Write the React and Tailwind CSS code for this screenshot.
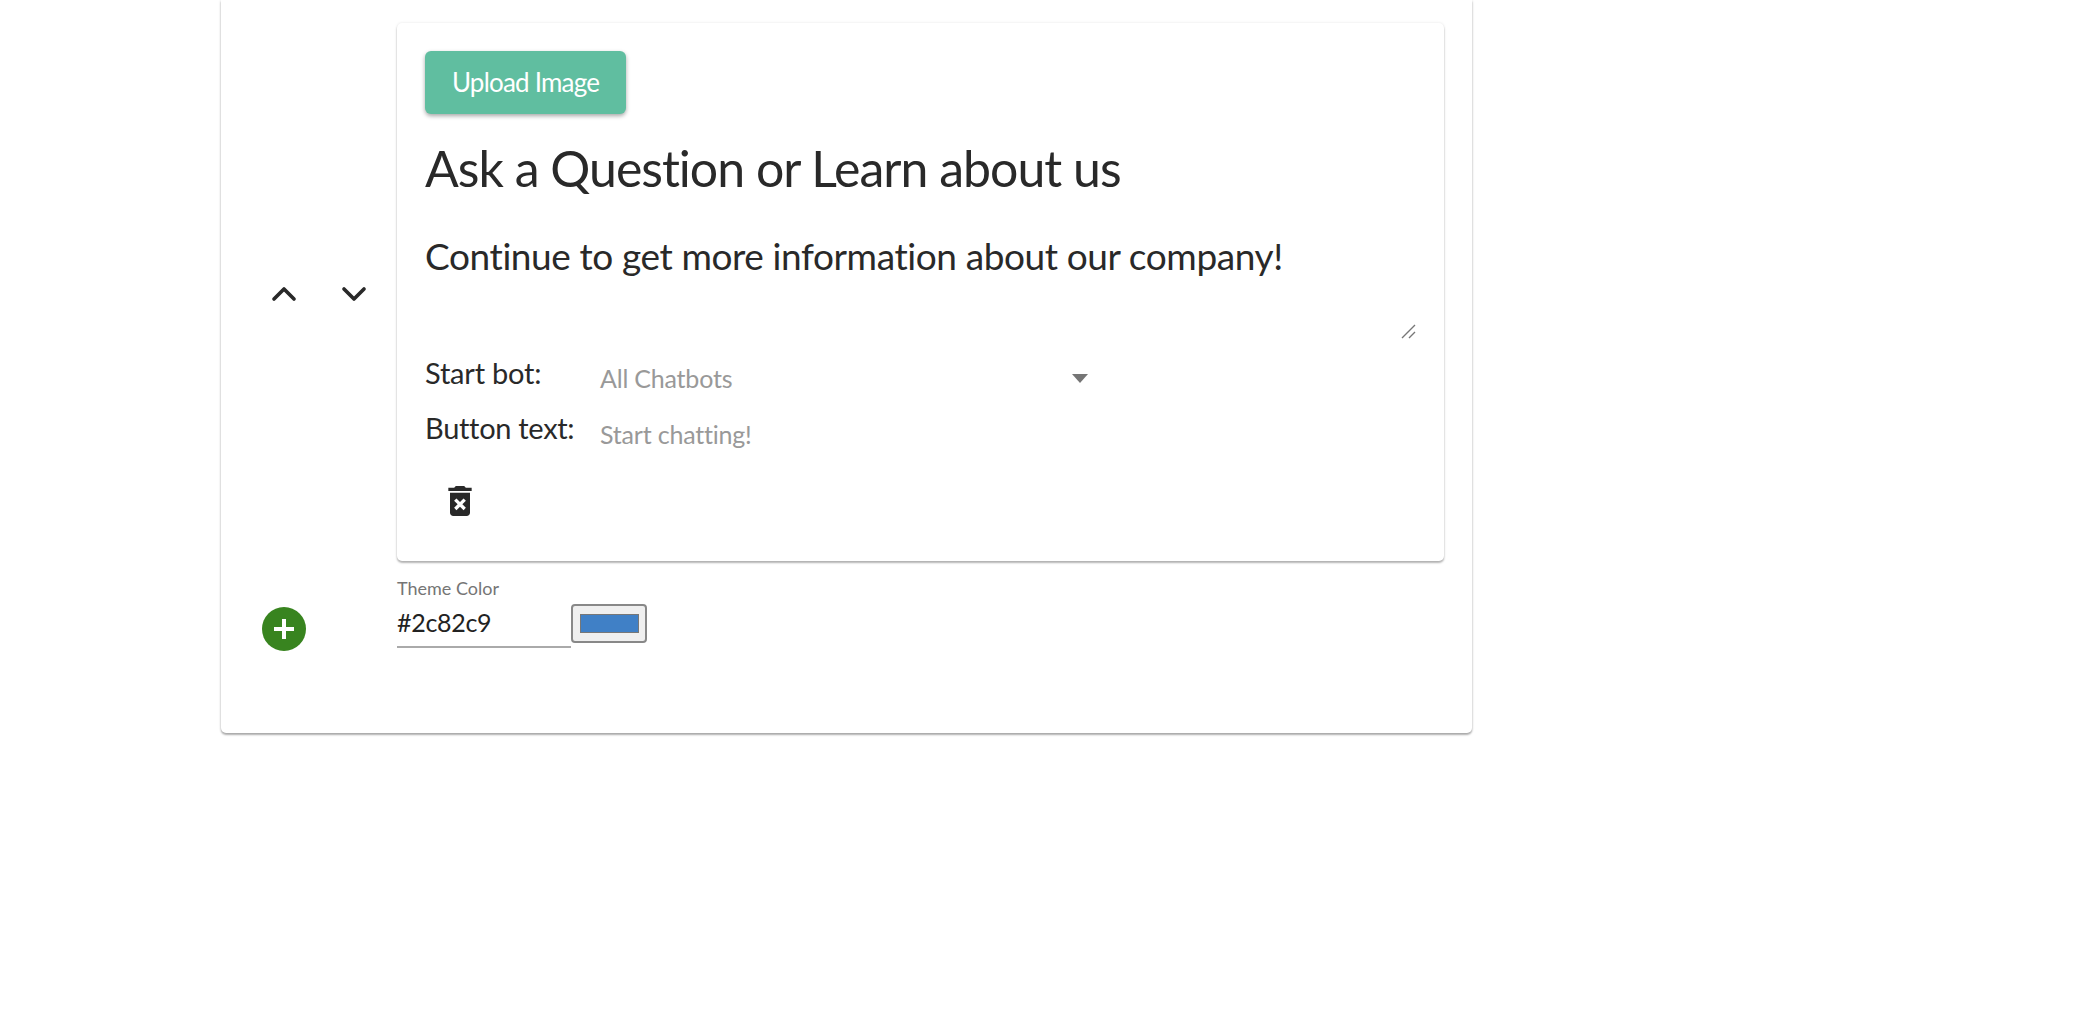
import { ChevronUp, ChevronDown } from 'lucide-react';

function TrashIcon() {
    return (
        <svg className="w-[40px] h-[40px] text-[#292929]" viewBox="0 0 24 24" fill="currentColor">
            <path d="M6 19c0 1.1.9 2 2 2h8c1.1 0 2-.9 2-2V7H6v12zm2.46-7.12 1.41-1.41L12 12.59l2.12-2.12 1.41 1.41L13.41 14l2.12 2.12-1.41 1.41L12 15.41l-2.12 2.12-1.41-1.41L10.59 14l-2.13-2.12zM15.5 4l-1-1h-5l-1 1H5v2h14V4z" />
        </svg>
    );
}

function PlusCircle() {
    return (
        <svg className="w-[44px] h-[44px]" viewBox="0 0 44 44">
            <circle cx="22" cy="22" r="22" fill="#38841f" />
            <path d="M22 12v20M12 22h20" stroke="#fff" strokeWidth="4" />
        </svg>
    );
}

export default function App() {
    return (
        <div className="h-[1013px] bg-white overflow-hidden font-['Lato',sans-serif] text-[#292929]">
            <div className="ml-[221px] w-[1251px] h-[733px] bg-white rounded-b-[5px] shadow-[0_2px_2px_rgba(0,0,0,0.3),0_0_3px_rgba(0,0,0,0.14)] flex">
                <div className="w-[176px] shrink-0 flex flex-col items-start">
                    <div className="mt-[274px] ml-[43px] flex gap-[30px]">
                        <ChevronUp className="w-[40px] h-[40px]" strokeWidth={2.2} />
                        <ChevronDown className="w-[40px] h-[40px]" strokeWidth={2.2} />
                    </div>
                    <div className="mt-[293px] ml-[41px]">
                        <PlusCircle />
                    </div>
                </div>

                <div className="w-[1047px] shrink-0 pt-[23px]">
                    <div className="relative h-[538px] rounded-[5px] bg-white pl-[28px] pt-[28px] shadow-[0_2px_2px_rgba(0,0,0,0.28),0_0_3px_rgba(0,0,0,0.1)]">
                        <button className="w-[201px] h-[63px] rounded-[6px] bg-[#60bea0] text-white text-[26px] tracking-[-0.8px] shadow-[0_2px_4px_rgba(0,0,0,0.35)]">
                            Upload Image
                        </button>
                        <h2 className="mt-[24px] text-[50px] leading-[60px] tracking-[-1px]">Ask a Question or Learn about us</h2>
                        <p className="mt-[35px] text-[37px] leading-[45px] tracking-[-0.4px]">Continue to get more information about our company!</p>
                        <svg className="absolute left-[1003px] top-[300px] w-[16px] h-[16px] text-[#777]" viewBox="0 0 16 16" fill="none" stroke="currentColor" strokeWidth="1.4">
                            <path d="M2 15 15 2M9 15l6-6" />
                        </svg>
                        <div className="mt-[76px] flex items-start">
                            <span className="w-[175px] text-[29px] leading-[38px] tracking-[-0.2px]">Start bot:</span>
                            <div className="w-[489px] pt-[6px] flex items-center justify-between text-[25px] leading-[36px] tracking-[-0.2px] text-[#999]">
                                <span>All Chatbots</span>
                                <span className="mr-[1px] w-0 h-0 border-x-[8px] border-x-transparent border-t-[9px] border-t-[#757575]" />
                            </div>
                        </div>
                        <div className="mt-[13px] flex items-start">
                            <span className="w-[175px] text-[29px] leading-[38px] tracking-[-0.3px]">Button text:</span>
                            <span className="pt-[7px] text-[25px] leading-[36px] tracking-[-0.2px] text-[#999]">Start chatting!</span>
                        </div>
                        <div className="mt-[29px] ml-[15px]">
                            <TrashIcon />
                        </div>
                    </div>

                    <div className="mt-[16px] text-[18px] leading-[22px] text-[#757575]">Theme Color</div>
                    <div className="flex items-start mt-[6px]">
                        <div className="w-[174px] h-[43px] border-b-2 border-[#aaa] text-[25px] leading-[35px] tracking-[-0.3px] text-[#222]">#2c82c9</div>
                        <div className="w-[76px] h-[39px] -mt-[1px] rounded-[4px] border-2 border-[#888] bg-[#efefef] flex items-center justify-center">
                            <div className="w-[59px] h-[19px] bg-[#4080c6] border border-[#777]" />
                        </div>
                    </div>
                </div>
            </div>
        </div>
    );
}
